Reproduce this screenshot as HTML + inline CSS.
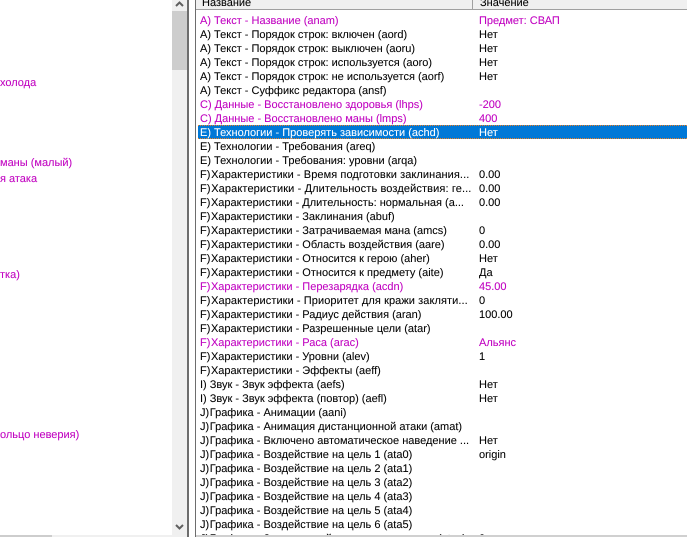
<!DOCTYPE html>
<html><head><meta charset="utf-8">
<style>
html,body{margin:0;padding:0;width:687px;height:537px;overflow:hidden;background:#fff}
body{position:relative;font-family:"Liberation Sans",sans-serif;font-size:11px;color:#000;-webkit-font-smoothing:none;font-smooth:never;text-rendering:geometricPrecision}
div{position:absolute}
.t{white-space:pre;line-height:14px;height:14px;-webkit-text-stroke:.07px}
.m{color:#c000c0}
.n{left:200px;width:271px;overflow:hidden}
.v{left:479px}
.l{color:#c000c0}
.s{letter-spacing:-2.5px}
.w{letter-spacing:.08px}
.x{letter-spacing:.12px}
</style></head><body>
<div class="t l" style="left:0;top:76px">холода</div>
<div class="t l" style="left:0;top:156px">маны (малый)</div>
<div class="t l" style="left:0;top:172px">я атака</div>
<div class="t l" style="left:0;top:268px">тка)</div>
<div class="t l" style="left:0;top:428px">ольцо неверия)</div>

<div style="left:172px;top:0;width:15px;height:537px;background:#f0f0f0"></div>
<div style="left:172px;top:11px;width:15px;height:59px;background:#cdcdcd"></div>
<svg style="position:absolute;left:172px;top:0" width="15" height="10"><path d="M4 6 L7.5 2.5 L11 6" fill="none" stroke="#606060" stroke-width="2"/></svg>
<svg style="position:absolute;left:172px;top:520px" width="15" height="12"><path d="M4 5 L7.5 8.5 L11 5" fill="none" stroke="#606060" stroke-width="2"/></svg>
<div style="left:0;top:535px;width:52px;height:2px;background:#cdcdcd"></div>
<div style="left:52px;top:535px;width:120px;height:2px;background:#f0f0f0"></div>
<div style="left:187px;top:0;width:2px;height:537px;background:#6d6d6d"></div>
<div style="left:195px;top:0;width:1px;height:537px;background:#6d6d6d"></div>

<div style="left:196px;top:0;width:491px;height:9px;background:#f0f0f0"></div>
<div style="left:196px;top:9px;width:491px;height:1px;background:#a0a0a0"></div>
<div style="left:472px;top:0;width:1px;height:9px;background:#a0a0a0"></div>
<div style="left:196px;top:0;width:491px;height:9px;overflow:hidden">
<div class="t" style="left:6px;top:-4px">Название</div>
<div class="t" style="left:284px;top:-4px">Значение</div>
</div>

<div style="left:198px;top:125px;width:489px;height:14px;background:#0078d7"></div>
<div style="left:198px;top:125px;width:489px;height:0;border-top:1px dotted #f08020"></div>
<div style="left:198px;top:138px;width:489px;height:0;border-top:1px dotted #f08020"></div>

<div style="left:0;top:1px;width:687px;height:534px;overflow:hidden">
<div class="t n m" style="top:13px">A) Текст - Название (anam)</div><div class="t v m" style="top:13px">Предмет: СВАП</div>
<div class="t n" style="top:27px">A) Текст - Порядок строк: включен (aord)</div><div class="t v" style="top:27px">Нет</div>
<div class="t n" style="top:41px">A) Текст - Порядок строк: выключен (aoru)</div><div class="t v" style="top:41px">Нет</div>
<div class="t n" style="top:55px">A) Текст - Порядок строк: используется (aoro)</div><div class="t v" style="top:55px">Нет</div>
<div class="t n" style="top:69px">A) Текст - Порядок строк: не используется (aorf)</div><div class="t v" style="top:69px">Нет</div>
<div class="t n" style="top:83px">A) Текст - Суффикс редактора (ansf)</div>
<div class="t n m" style="top:97px">C) Данные - Восстановлено здоровья (lhps)</div><div class="t v m" style="top:97px">-200</div>
<div class="t n m" style="top:111px">C) Данные - Восстановлено маны (lmps)</div><div class="t v m" style="top:111px">400</div>
<div class="t n" style="top:125px;color:#fff">E) Технологии - Проверять зависимости (achd)</div><div class="t v" style="top:125px;color:#fff">Нет</div>
<div class="t n" style="top:139px">E) Технологии - Требования (areq)</div>
<div class="t n" style="top:153px">E) Технологии - Требования: уровни (arqa)</div>
<div class="t n w" style="top:167px">F)<span class="s"> </span>Характеристики - Время подготовки заклинания...</div><div class="t v" style="top:167px">0.00</div>
<div class="t n x" style="top:181px">F)<span class="s"> </span>Характеристики - Длительность воздействия: ге...</div><div class="t v" style="top:181px">0.00</div>
<div class="t n" style="top:195px">F)<span class="s"> </span>Характеристики - Длительность: нормальная (а...</div><div class="t v" style="top:195px">0.00</div>
<div class="t n" style="top:209px">F)<span class="s"> </span>Характеристики - Заклинания (abuf)</div>
<div class="t n" style="top:223px">F)<span class="s"> </span>Характеристики - Затрачиваемая мана (amcs)</div><div class="t v" style="top:223px">0</div>
<div class="t n" style="top:237px">F)<span class="s"> </span>Характеристики - Область воздействия (aare)</div><div class="t v" style="top:237px">0.00</div>
<div class="t n" style="top:251px">F)<span class="s"> </span>Характеристики - Относится к герою (aher)</div><div class="t v" style="top:251px">Нет</div>
<div class="t n" style="top:265px">F)<span class="s"> </span>Характеристики - Относится к предмету (aite)</div><div class="t v" style="top:265px">Да</div>
<div class="t n m" style="top:279px">F)<span class="s"> </span>Характеристики - Перезарядка (acdn)</div><div class="t v m" style="top:279px">45.00</div>
<div class="t n w" style="top:293px">F)<span class="s"> </span>Характеристики - Приоритет для кражи закляти...</div><div class="t v" style="top:293px">0</div>
<div class="t n" style="top:307px">F)<span class="s"> </span>Характеристики - Радиус действия (aran)</div><div class="t v" style="top:307px">100.00</div>
<div class="t n" style="top:321px">F)<span class="s"> </span>Характеристики - Разрешенные цели (atar)</div>
<div class="t n m" style="top:335px">F)<span class="s"> </span>Характеристики - Раса (arac)</div><div class="t v m" style="top:335px">Альянс</div>
<div class="t n" style="top:349px">F)<span class="s"> </span>Характеристики - Уровни (alev)</div><div class="t v" style="top:349px">1</div>
<div class="t n" style="top:363px">F)<span class="s"> </span>Характеристики - Эффекты (aeff)</div>
<div class="t n" style="top:377px">I) Звук - Звук эффекта (aefs)</div><div class="t v" style="top:377px">Нет</div>
<div class="t n" style="top:391px">I) Звук - Звук эффекта (повтор) (aefl)</div><div class="t v" style="top:391px">Нет</div>
<div class="t n" style="top:405px">J)<span class="s"> </span>Графика - Анимации (aani)</div>
<div class="t n" style="top:419px">J)<span class="s"> </span>Графика - Анимация дистанционной атаки (amat)</div>
<div class="t n" style="top:433px">J)<span class="s"> </span>Графика - Включено автоматическое наведение ...</div><div class="t v" style="top:433px">Нет</div>
<div class="t n" style="top:447px">J)<span class="s"> </span>Графика - Воздействие на цель 1 (ata0)</div><div class="t v" style="top:447px">origin</div>
<div class="t n" style="top:461px">J)<span class="s"> </span>Графика - Воздействие на цель 2 (ata1)</div>
<div class="t n" style="top:475px">J)<span class="s"> </span>Графика - Воздействие на цель 3 (ata2)</div>
<div class="t n" style="top:489px">J)<span class="s"> </span>Графика - Воздействие на цель 4 (ata3)</div>
<div class="t n" style="top:503px">J)<span class="s"> </span>Графика - Воздействие на цель 5 (ata4)</div>
<div class="t n" style="top:517px">J)<span class="s"> </span>Графика - Воздействие на цель 6 (ata5)</div>
<div class="t n" style="top:531px">J)<span class="s"> </span>Графика - Запускаемый снаряд: количество (atac)</div><div class="t v" style="top:531px">0</div>
</div>
<div style="left:196px;top:535px;width:491px;height:2px;background:#d0d0d0"></div>
</body></html>
